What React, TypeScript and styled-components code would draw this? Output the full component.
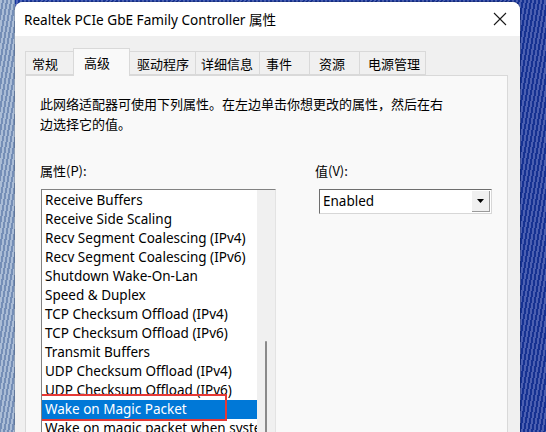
import React from 'react';
import styled, { createGlobalStyle } from 'styled-components';

const GlobalStyle = createGlobalStyle`
  html, body {
    margin: 0;
    padding: 0;
    width: 546px;
    height: 432px;
    overflow: hidden;
  }
  body {
    font-family: "Noto Sans", "Noto Sans CJK SC", sans-serif;
    color: #000;
  }
`;

const Desktop = styled.div`
  width: 546px;
  height: 432px;
  box-sizing: border-box;
  padding: 2px 0 0 15px;
  overflow: hidden;
  background:
    repeating-linear-gradient(100deg, rgba(255, 255, 255, 0.25) 0 2px, rgba(40, 70, 130, 0.25) 2px 4px),
    linear-gradient(90deg, #8ea6c8 0 15px, #1433a6 15px, #0f2a96 100%);
`;

const Dialog = styled.div`
  width: 505px;
  height: 440px;
  background: #f0f0f0;
  border-radius: 8px 8px 0 0;
  overflow: hidden;
  box-shadow: 0 0 0 1px rgba(0, 0, 0, 0.15);
`;

const TitleBar = styled.div`
  height: 34px;
  background: #fff;
  display: flex;
  align-items: center;
  justify-content: space-between;
  padding: 0 13px 0 9px;
`;

const Title = styled.span`
  font-size: 13.6px;
`;

const Body = styled.div`
  padding: 11px 0 0 10px;
`;

const TabStrip = styled.div`
  display: flex;
  align-items: flex-end;
  height: 28px;
  padding-left: 1px;
`;

const Tab = styled.div<{ $active?: boolean; $width: number; $pad: number }>`
  box-sizing: border-box;
  width: ${(p) => p.$width}px;
  padding-left: ${(p) => p.$pad}px;
  height: ${(p) => (p.$active ? '28px' : '24px')};
  margin-bottom: ${(p) => (p.$active ? '-1px' : '0')};
  display: flex;
  align-items: center;
  font-family: "Noto Sans CJK SC", sans-serif;
  font-size: 13px;
  background: ${(p) => (p.$active ? '#f9f9f9' : '#f0f0f0')};
  border: 1px solid #d9d9d9;
  border-bottom: ${(p) => (p.$active ? 'none' : '1px solid #d9d9d9')};
  margin-left: -1px;
  position: relative;
  z-index: ${(p) => (p.$active ? 1 : 0)};
`;

const Panel = styled.div`
  width: 483px;
  height: 400px;
  box-sizing: border-box;
  background: #f9f9f9;
  border: 1px solid #d9d9d9;
  padding: 18px 0 0 14px;
`;

const Description = styled.p`
  margin: 0;
  font-family: "Noto Sans CJK SC", sans-serif;
  font-size: 13px;
  line-height: 20px;
  height: 40px;
  width: 410px;
`;

const Columns = styled.div`
  display: flex;
  margin-top: 28px;
`;

const Column = styled.div<{ $width: number }>`
  width: ${(p) => p.$width}px;
  display: flex;
  flex-direction: column;
`;

const FieldLabel = styled.div`
  font-family: "Noto Sans CJK SC", sans-serif;
  font-size: 13px;
  line-height: 17px;
  height: 17px;
  margin-bottom: 10px;
`;

const ListBox = styled.div`
  margin-left: 1px;
  width: 235px;
  height: 262px;
  box-sizing: border-box;
  background: #fff;
  border-top: 1px solid #828282;
  border-left: 1px solid #828282;
  border-right: 1px solid #e3e3e3;
  display: flex;
`;

const Items = styled.div`
  flex: 1;
  overflow: hidden;
  padding-top: 1px;
`;

const Item = styled.div<{ $selected?: boolean }>`
  height: 19px;
  line-height: 19px;
  padding-left: 3px;
  font-size: 13.5px;
  white-space: nowrap;
  color: ${(p) => (p.$selected ? '#fff' : '#000')};
  background: ${(p) => (p.$selected ? '#0078d7' : 'transparent')};
  position: relative;
`;

const Highlight = styled.div`
  position: absolute;
  box-sizing: border-box;
  left: -7px;
  top: -6px;
  width: 192px;
  height: 27px;
  border: 2px solid #e53935;
  pointer-events: none;
`;

const ScrollTrack = styled.div`
  width: 18px;
  background: #f0f0f0;
  display: flex;
  justify-content: center;
`;

const ScrollThumb = styled.div`
  width: 2px;
  margin-top: 151px;
  background: #8a8a8a;
  border-radius: 1px;
`;

const Combo = styled.div`
  box-sizing: border-box;
  margin-left: 4px;
  width: 173px;
  height: 25px;
  background: #fff;
  border-top: 1px solid #6e6e6e;
  border-left: 1px solid #6e6e6e;
  border-right: 1px solid #d7d7d7;
  border-bottom: 1px solid #d7d7d7;
  display: flex;
  align-items: stretch;
`;

const ComboText = styled.div`
  flex: 1;
  font-size: 13.5px;
  line-height: 23px;
  padding-left: 3px;
`;

const ComboButton = styled.div`
  width: 17px;
  margin: 1px 1px 1px 0;
  background: #f0f0f0;
  border-right: 1px solid #9a9a9a;
  border-bottom: 1px solid #9a9a9a;
  display: flex;
  align-items: center;
  justify-content: center;
`;

const tabs = [
  { label: '常规', width: 49, pad: 6 },
  { label: '高级', width: 57, pad: 10 },
  { label: '驱动程序', width: 67, pad: 7 },
  { label: '详细信息', width: 65, pad: 5 },
  { label: '事件', width: 51, pad: 6 },
  { label: '资源', width: 51, pad: 9 },
  { label: '电源管理', width: 67, pad: 8 },
];

const properties = [
  'Receive Buffers',
  'Receive Side Scaling',
  'Recv Segment Coalescing (IPv4)',
  'Recv Segment Coalescing (IPv6)',
  'Shutdown Wake-On-Lan',
  'Speed & Duplex',
  'TCP Checksum Offload (IPv4)',
  'TCP Checksum Offload (IPv6)',
  'Transmit Buffers',
  'UDP Checksum Offload (IPv4)',
  'UDP Checksum Offload (IPv6)',
  'Wake on Magic Packet',
  'Wake on magic packet when system is in the S0ix power state',
];

const App: React.FC = () => {
  return (
    <>
      <GlobalStyle />
      <Desktop>
        <Dialog>
          <TitleBar>
            <Title>Realtek PCIe GbE Family Controller 属性</Title>
            <svg width="14" height="14" viewBox="0 0 14 14">
              <path d="M1 1L13 13M13 1L1 13" stroke="#1a1a1a" strokeWidth="1.1" />
            </svg>
          </TitleBar>
          <Body>
            <TabStrip>
              {tabs.map((t) => (
                <Tab key={t.label} $active={t.label === '高级'} $width={t.width} $pad={t.pad}>
                  {t.label}
                </Tab>
              ))}
            </TabStrip>
            <Panel>
              <Description>
                此网络适配器可使用下列属性。在左边单击你想更改的属性，然后在右边选择它的值。
              </Description>
              <Columns>
                <Column $width={275}>
                  <FieldLabel>属性(P):</FieldLabel>
                  <ListBox>
                    <Items>
                      {properties.map((p) => {
                        const selected = p === 'Wake on Magic Packet';
                        return (
                          <Item key={p} $selected={selected}>
                            {p}
                            {selected && <Highlight />}
                          </Item>
                        );
                      })}
                    </Items>
                    <ScrollTrack>
                      <ScrollThumb />
                    </ScrollTrack>
                  </ListBox>
                </Column>
                <Column $width={180}>
                  <FieldLabel>值(V):</FieldLabel>
                  <Combo>
                    <ComboText>Enabled</ComboText>
                    <ComboButton>
                      <svg width="7" height="4" viewBox="0 0 7 4">
                        <path d="M0 0H7L3.5 4Z" fill="#000" />
                      </svg>
                    </ComboButton>
                  </Combo>
                </Column>
              </Columns>
            </Panel>
          </Body>
        </Dialog>
      </Desktop>
    </>
  );
};

export default App;
